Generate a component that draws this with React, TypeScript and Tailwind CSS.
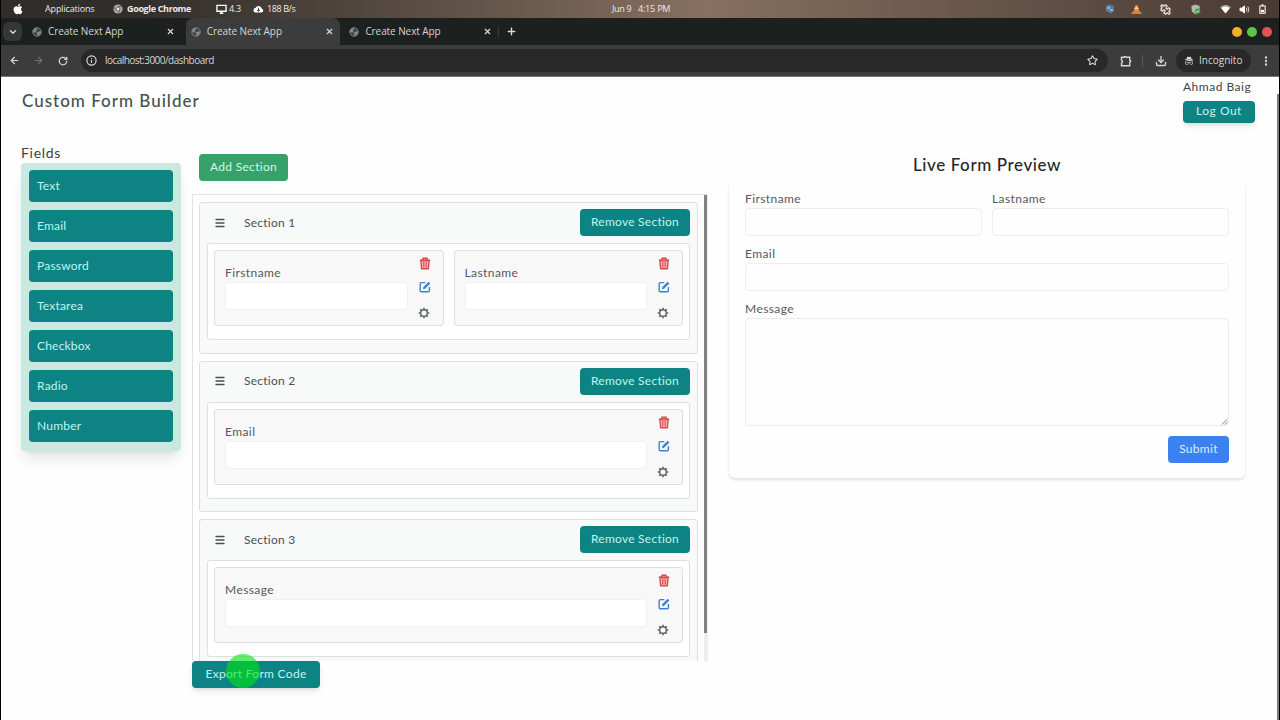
import { FaApple } from "react-icons/fa";
import { BsIncognito } from "react-icons/bs";
import { ArrowLeft, ArrowRight, ChevronDown, Download, Info, Menu, MoreVertical, Plus, Puzzle, RotateCw, Star, X } from "lucide-react";

const fields = ["Text", "Email", "Password", "Textarea", "Checkbox", "Radio", "Number"];

const sections = [
  { title: "Section 1", fields: ["Firstname", "Lastname"] },
  { title: "Section 2", fields: ["Email"] },
  { title: "Section 3", fields: ["Message"] },
];

function GlobeIcon() {
  return (
    <svg viewBox="0 0 12 12" className="size-[10px] shrink-0">
      <circle cx="6" cy="6" r="5.2" fill="#3d4242" stroke="#858989" strokeWidth="1" />
      <path d="M2 2.8 5.6 1l.8 2-2 1.4.9 1.5-1.8 1L1 5.6zM7 5.6l3.8-.6v2L8.5 10 6 11l.4-2.5-1-1.4z" fill="#858989" />
    </svg>
  );
}

function TrashIcon() {
  return (
    <svg viewBox="0 0 12 13" className="h-[13px] w-3 text-[#d9484a]" fill="none" stroke="currentColor">
      <path d="M.8 3.2h10.4M4 3V1.2h4V3" strokeWidth="1.4" />
      <path d="m1.9 3.5.7 8.2h6.8l.7-8.2z" fill="#f6b9b9" strokeWidth="1.4" strokeLinejoin="round" />
      <path d="M4.8 4.5v6M7.2 4.5v6" strokeWidth="1.1" />
    </svg>
  );
}

function EditIcon() {
  return (
    <svg viewBox="0 0 12 12" className="size-3 text-[#3f81cd]" fill="none" stroke="currentColor">
      <path d="M6.3 1.6H2.4Q1.2 1.6 1.2 2.8v6.8q0 1.2 1.2 1.2h6.8q1.2 0 1.2-1.2V6" strokeWidth="1.4" />
      <path d="M4 8.2 4.4 6 9.6.8l1.7 1.7L6.1 7.7z" fill="currentColor" stroke="none" />
    </svg>
  );
}

function GearIcon() {
  return (
    <svg viewBox="0 0 12 12" className="size-3 text-[#606467]" fill="none" stroke="currentColor">
      <circle cx="6" cy="6" r="3.3" strokeWidth="1.4" />
      <path d="M6 .7v2M6 9.3v2M.7 6h2M9.3 6h2M2.3 2.3l1.3 1.3M8.4 8.4l1.3 1.3M2.3 9.7l1.3-1.3M8.4 3.6l1.3-1.3" strokeWidth="1.6" />
    </svg>
  );
}

function SystemBar() {
  return (
    <div className="flex h-[18px] items-center bg-linear-to-r from-[#302d2a] from-10% via-[#87705f] via-55% to-[#493a34] text-[9px] text-[#eeeae7]">
      <div className="flex w-[600px] items-center">
        <FaApple className="ml-[11px] size-3 text-white" />
        <span className="ml-[21px] w-[68px] tracking-[-0.15px]">Applications</span>
        <svg viewBox="0 0 12 12" className="size-[10px]">
          <circle cx="6" cy="6" r="5.5" fill="#aaa" />
          <path d="M6 3h5M3.5 7.5 1 3.3M8.4 7.5 6 11.5" stroke="#555" />
          <circle cx="6" cy="6" r="2.3" fill="#eee" stroke="#555" />
        </svg>
        <span className="ml-1 w-[89px] font-bold tracking-[-0.35px]">Google Chrome</span>
        <svg viewBox="0 0 12 11" className="h-[10px] w-[11px]" fill="none" stroke="white" strokeWidth="1.5">
          <path d="M1 1.5h10v6.5H1zM4 10.2h4M6 8v2" />
        </svg>
        <span className="ml-[2px] w-[24px] tracking-[-0.3px]">4.3</span>
        <svg viewBox="0 0 12 9" className="h-2 w-[11px]">
          <path d="M3 8.5a2.5 2.5 0 0 1-.4-5A3.6 3.6 0 0 1 9.5 4a2.3 2.3 0 0 1 0 4.5z" fill="white" />
          <path d="M6 3v4M4.3 5.5 6 7.2l1.7-1.7" stroke="#333" fill="none" />
        </svg>
        <span className="ml-[3px] tracking-[-0.4px]">188 B/s</span>
      </div>
      <span className="ml-[11px] w-[21px] whitespace-nowrap tracking-[-0.3px]">Jun 9</span>
      <span className="ml-[5px] whitespace-nowrap tracking-[-0.2px]">4:15 PM</span>
      <div className="mr-[13px] ml-auto flex items-center">
        <svg viewBox="0 0 10 10" className="size-[10px]">
          <path d="M1 2 5 .5 9 2v5L6 9.5 3 8 1 7z" fill="#527da2" />
          <path d="M2 2.5h3V5H2zM5 5h3v2H5z" fill="#8cb1cc" />
        </svg>
        <svg viewBox="0 0 12 12" className="ml-[16px] size-[11px]">
          <path d="M5 1h2l2.5 8h-7z" fill="#ee8a2b" />
          <path d="M4.3 3.5h3.4l.5 2H3.8z" fill="#f6dfc6" />
          <path d="M1 8.5h10l.6 2.5H.4z" fill="#e17c25" />
        </svg>
        <Puzzle className="ml-[18px] size-[11px] rotate-90" strokeWidth={2.6} />
        <svg viewBox="0 0 12 12" className="ml-[19px] size-[11px]">
          <path d="m6 .5 4.5 1.7V6L6 11.5 2 8.3 1.5 2.2z" fill="#b6b8a9" />
          <circle cx="8.3" cy="8" r="3" fill="#3ba34c" />
          <path d="m6.9 8 1 1 1.9-2" fill="none" stroke="white" />
        </svg>
        <svg viewBox="0 0 12 10" className="ml-[19px] h-[9px] w-[11px]">
          <path d="M6 9.5 1 3.4q5-4 10 0z" fill="white" />
          <path d="M.4 2.8q5.6-4.3 11.2 0" fill="none" stroke="white" strokeWidth=".8" />
        </svg>
        <svg viewBox="0 0 12 10" className="ml-[8px] h-[9px] w-[11px]" fill="none" stroke="white">
          <path d="M1 3.5h2L6 1v8L3 6.5H1z" fill="white" />
          <path d="M8 3q1.2 2 0 4M9.8 1.6q2 3.4 0 6.8" strokeWidth=".9" />
        </svg>
        <svg viewBox="0 0 8 11" className="ml-[9px] h-[10px] w-[7px]" fill="none" stroke="white">
          <path d="M1 2h6v8.3H1zM3 .8h2" strokeWidth="1.2" />
          <path d="M2.2 6.5h3.6v2.7H2.2z" fill="white" stroke="none" />
        </svg>
      </div>
    </div>
  );
}

function Tab({ active = false }: { active?: boolean }) {
  return (
    <div className={active ? "flex h-[27px] w-[154px] items-center rounded-t-lg bg-[#3c3c3c] pl-[5px]" : "flex h-[27px] w-[154px] items-center pl-[5px]"}>
      <GlobeIcon />
      <span className="ml-[6px] w-[118px] text-[10px] tracking-[-0.08px] text-[#d3d5d5]">Create Next App</span>
      <X className="size-[9px] shrink-0 text-[#dedede]" strokeWidth={3} />
    </div>
  );
}

function Browser() {
  return (
    <>
      <div className="flex h-[27px] items-center bg-[#1c201f]">
        <div className="ml-[2px] flex size-[19px] items-center justify-center rounded-md bg-[#343837]">
          <ChevronDown className="size-[10px] text-[#ddd]" strokeWidth={3} />
        </div>
        <div className="ml-[5px] flex gap-[4.7px]">
          <Tab />
          <Tab active />
          <Tab />
        </div>
        <div className="h-3 w-px bg-[#343837]" />
        <Plus className="ml-[7px] size-[11px] text-[#ddd]" strokeWidth={3} />
        <div className="mr-[7px] ml-auto flex gap-[5px]">
          <div className="size-[10px] rounded-full bg-[#f0ae32]" />
          <div className="size-[10px] rounded-full bg-[#5dc544]" />
          <div className="size-[10px] rounded-full bg-[#df5555]" />
        </div>
      </div>
      <div className="flex h-8 items-center border-b border-[#777] bg-[#3c3c3c] text-[#d8d8d8]">
        <ArrowLeft className="ml-2 size-[11px]" strokeWidth={2.6} />
        <ArrowRight className="ml-[13px] size-[11px] text-[#757575]" strokeWidth={2.4} />
        <RotateCw className="ml-[14px] size-[10px]" strokeWidth={3} />
        <div className="ml-[13px] flex h-[23px] w-[1027px] items-center rounded-full bg-[#282828] pr-[10px] pl-[5px]">
          <Info className="size-[11px]" strokeWidth={2.6} />
          <span className="ml-[8px] text-[10px] tracking-[-0.53px] text-[#d5d5d5]">localhost:3000/dashboard</span>
          <Star className="ml-auto size-[11px]" strokeWidth={2.4} />
        </div>
        <svg viewBox="0 0 12 12" className="ml-[12px] size-3" fill="none" stroke="currentColor" strokeWidth="1.4">
          <path d="M1.5 2.2h2.8q.7-1.6 1.8 0h3.6v3q2 .9 0 2v3.6H1.5V8.2q2-1.4 0-2.8z" />
        </svg>
        <div className="ml-[10px] h-3 w-px bg-[#5a5a5a]" />
        <Download className="ml-[12px] size-3" strokeWidth={2.6} />
        <div className="ml-[9px] flex h-[23px] w-[75px] items-center rounded-full bg-[#282828] pl-2">
          <BsIncognito className="size-[10px]" />
          <span className="ml-[5px] text-[10px]">Incognito</span>
        </div>
        <MoreVertical className="ml-[9px] size-3" strokeWidth={2.8} />
      </div>
    </>
  );
}

function Sidebar() {
  return (
    <aside className="w-40">
      <h2 className="h-[19px] text-[14px] leading-[17px] tracking-[0.7px] text-[#3c4145]">Fields</h2>
      <div className="flex h-[288px] flex-col gap-[8px] rounded bg-[#c9e8df] p-2 pt-[7px] shadow-lg">
        {fields.map((field) => (
          <div key={field} className="flex h-8 items-center rounded bg-[#0e8383] pb-px pl-[8px] text-[12px] tracking-[0.2px] text-[#bff5ee]">
            {field}
          </div>
        ))}
      </div>
    </aside>
  );
}

function FieldCard({ label }: { label: string }) {
  return (
    <div className="flex h-[76px] flex-1 rounded-[3px] border border-[#dedfe0] bg-[#f8f8f8] pl-[10px]">
      <div className="flex-1 pt-[14px]">
        <div className="h-[17px] text-[12px] leading-4 tracking-[0.42px] text-[#56595d]">{label}</div>
        <div className="h-7 rounded border border-[#f0f1f1] bg-white" />
      </div>
      <div className="w-[35px] pt-[6px] pl-[11px]">
        <TrashIcon />
        <div className="mt-[11px]">
          <EditIcon />
        </div>
        <div className="-ml-px mt-[14px]">
          <GearIcon />
        </div>
      </div>
    </div>
  );
}

function Builder() {
  return (
    <main className="ml-[11px] w-[516px] pt-[10px]">
      <button className="ml-[7px] block h-[27px] w-[89px] rounded bg-[#38a169] pb-[2px] text-[12px] tracking-[0.3px] text-[#d6f8e4]">Add Section</button>
      <div className="mt-[13px] flex h-[467px] overflow-hidden border-t border-l border-[#e1e2e3]">
        <div className="flex w-[511px] flex-col gap-[7px] pt-[7px] pr-[6px] pl-[6px]">
          {sections.map((section) => (
            <section key={section.title} className="h-[151.7px] shrink-0 rounded-[3px] border border-[#dedfe0] bg-[#f8f9f9] pr-[7px] pl-[7px]">
              <div className="flex h-10 items-center pb-px">
                <Menu className="ml-[7px] size-3 text-[#4b4f52]" strokeWidth={2.6} />
                <span className="ml-[18px] text-[12px] tracking-[0.25px] text-[#4b4f54]">{section.title}</span>
                <button className="ml-auto h-[27px] w-[110px] rounded bg-[#0e8383] pb-px text-[12px] tracking-[0.25px] text-[#bff5ee]">Remove Section</button>
              </div>
              <div className="flex h-[97px] gap-[10px] rounded-[3px] border border-[#dedfe0] bg-white px-[6px] pt-[6px]">
                {section.fields.map((field) => (
                  <FieldCard key={field} label={field} />
                ))}
              </div>
            </section>
          ))}
        </div>
        <div className="h-full w-1 bg-[#eeeeee]">
          <div className="h-[438px] w-[3px] bg-[#808385]" />
        </div>
      </div>
      <button className="relative block h-[27px] w-32 rounded bg-[#0e8383] pb-px text-[12px] tracking-[0.3px] text-[#bff5ee] shadow-md">
        Export Form Code
        <span className="absolute -top-[7px] left-[34px] size-[34px] rounded-full bg-[#00e414]/60" />
      </button>
    </main>
  );
}

function PreviewField({ label, large = false }: { label: string; large?: boolean }) {
  return (
    <div className="flex-1">
      <div className="h-[17px] text-[12px] leading-4 tracking-[0.42px] text-[#56595d]">{label}</div>
      <div className={large ? "relative h-[108px] rounded border border-[#e9ebec]" : "h-7 rounded border border-[#eceeef]"}>
        {large && (
          <svg viewBox="0 0 8 8" className="absolute right-0 bottom-0 size-[7px]" stroke="#777">
            <path d="m1 7.5 6-6M4.5 7.5l3-3" />
          </svg>
        )}
      </div>
    </div>
  );
}

function Preview() {
  return (
    <section className="ml-[21px] w-[516px] pt-[8px]">
      <h2 className="h-[29px] text-center text-[17px] leading-[25px] font-medium tracking-[0.6px] text-[#25282b]">Live Form Preview</h2>
      <div className="flex h-[297px] flex-col rounded-md px-4 pt-[10px] shadow-[0_2px_3px_rgba(0,0,0,0.12)]">
        <div className="flex gap-[10px]">
          <PreviewField label="Firstname" />
          <PreviewField label="Lastname" />
        </div>
        <div className="mt-[10px] flex">
          <PreviewField label="Email" />
        </div>
        <div className="mt-[10px] flex">
          <PreviewField label="Message" large />
        </div>
        <button className="mt-[10px] h-[27px] w-[61px] self-end rounded bg-[#3b82f0] pb-px text-[12px] tracking-[0.3px] text-[#dcecff]">Submit</button>
      </div>
    </section>
  );
}

export default function App() {
  return (
    <div className="h-[720px] w-[1280px] overflow-hidden border-r border-l border-black bg-white font-['Open_Sans','Noto_Sans',sans-serif]">
      <SystemBar />
      <Browser />
      <div className="flex h-[643px] bg-[#fefefe] font-['Lato',sans-serif]">
        <div className="flex-1 pl-[20px]">
          <header className="flex h-[56px] justify-between">
            <h1 className="pt-[12px] pl-px text-[17px] leading-6 font-medium tracking-[1px] text-[#465052]">Custom Form Builder</h1>
            <div className="mr-[22px] w-[72px] pt-px">
              <div className="h-[23px] pt-px text-[12px] leading-4 tracking-[0.5px] text-[#404548]">Ahmad Baig</div>
              <button className="block h-[22px] w-[72px] rounded bg-[#0e8383] pb-[2px] text-[12px] tracking-[0.5px] text-[#bff5ee] shadow-md">Log Out</button>
            </div>
          </header>
          <div className="mt-[11px] flex">
            <Sidebar />
            <Builder />
            <Preview />
          </div>
        </div>
        <div className="w-[2px] pt-[17px]">
          <div className="h-full bg-[#777b7d]" />
        </div>
      </div>
    </div>
  );
}
